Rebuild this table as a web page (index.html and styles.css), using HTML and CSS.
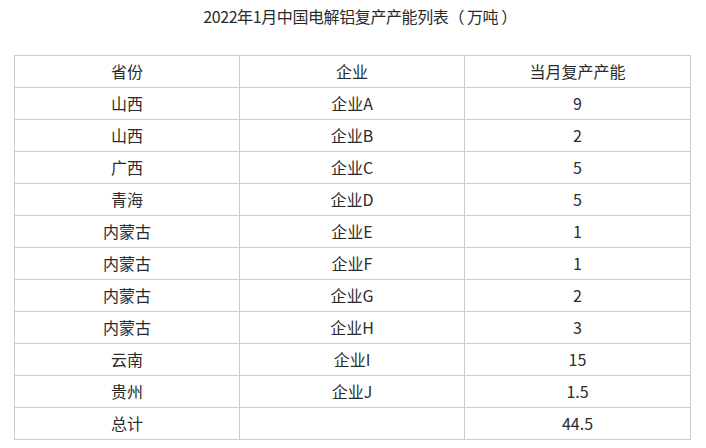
FILE: index.html
```html
<!DOCTYPE html>
<html lang="zh-CN">
<head>
<meta charset="utf-8">
<title>2022年1月中国电解铝复产产能列表</title>
<link rel="stylesheet" href="styles.css">
</head>
<body>
<div class="page">
  <h1 class="title">2022年1月中国电解铝复产产能列表<span class="paren open">（</span>万吨<span class="paren close">）</span></h1>
  <table class="data">
    <thead>
      <tr><th>省份</th><th>企业</th><th>当月复产产能</th></tr>
    </thead>
    <tbody>
      <tr><td>山西</td><td>企业A</td><td>9</td></tr>
      <tr><td>山西</td><td>企业B</td><td>2</td></tr>
      <tr><td>广西</td><td>企业C</td><td>5</td></tr>
      <tr><td>青海</td><td>企业D</td><td>5</td></tr>
      <tr><td>内蒙古</td><td>企业E</td><td>1</td></tr>
      <tr><td>内蒙古</td><td>企业F</td><td>1</td></tr>
      <tr><td>内蒙古</td><td>企业G</td><td>2</td></tr>
      <tr><td>内蒙古</td><td>企业H</td><td>3</td></tr>
      <tr><td>云南</td><td>企业I</td><td>15</td></tr>
      <tr><td>贵州</td><td>企业J</td><td>1.5</td></tr>
      <tr><td>总计</td><td></td><td>44.5</td></tr>
    </tbody>
  </table>
</div>
</body>
</html>
```
FILE: styles.css
```css
html, body {
  margin: 0;
  padding: 0;
  background: #fff;
}
.page {
  width: 706px;
  font-family: "Noto Sans CJK SC", "Noto Sans", sans-serif;
  color: #2b2b2b;
}
.title {
  margin: 0;
  height: 32px;
  line-height: 32px;
  font-size: 16px;
  font-weight: normal;
  text-align: center;
  padding-left: 14px;
  letter-spacing: -0.4px;
  white-space: nowrap;
}
.title .paren {
  text-spacing-trim: space-all;
}
.title .paren.open {
  padding-right: 3px;
}
.title .paren.close {
  padding-left: 3px;
}
.data {
  margin: 23px 0 0 14px;
  width: 677px;
  border-collapse: collapse;
  table-layout: fixed;
  font-size: 16px;
}
.data th, .data td {
  border: 1px solid #ccc;
  height: 31px;
  padding: 0;
  text-align: center;
  font-weight: normal;
  vertical-align: middle;
  line-height: 31px;
}
.data th:nth-child(1), .data td:nth-child(1) { width: 224px; }
.data th:nth-child(2), .data td:nth-child(2) { width: 224px; }
```
